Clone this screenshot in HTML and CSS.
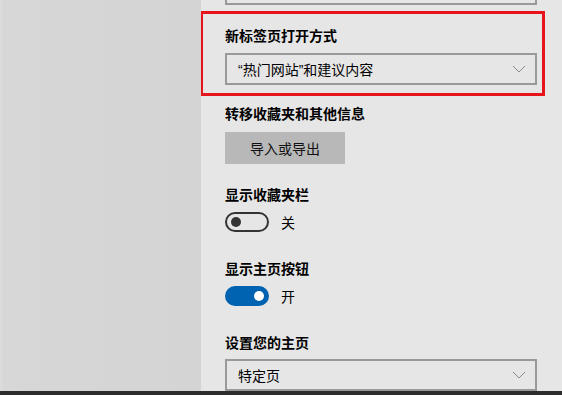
FILE: index.html
```html
<!DOCTYPE html>
<html lang="zh-CN">
<head>
<meta charset="utf-8">
<link rel="stylesheet" href="styles.css">
</head>
<body>
<div class="screen">
  <div class="main">
    <div class="backdrop"></div>
    <div class="panel">
      <div class="select select-cut"><span></span><svg class="chev" width="14" height="8" viewBox="0 0 14 8"><path d="M1 1 L7 7 L13 1" fill="none" stroke="#8a8a8a" stroke-width="1"/></svg></div>
      <div class="highlight">
        <div class="heading">新标签页打开方式</div>
        <div class="select"><span><span class="q">“</span>热门网站<span class="q">”</span>和建议内容</span><svg class="chev" width="14" height="8" viewBox="0 0 14 8"><path d="M1 1 L7 7 L13 1" fill="none" stroke="#8a8a8a" stroke-width="1"/></svg></div>
      </div>
      <div class="group g-first">
        <div class="heading">转移收藏夹和其他信息</div>
        <div class="button">导入或导出</div>
      </div>
      <div class="group g-btn">
        <div class="heading">显示收藏夹栏</div>
        <div class="toggle-row"><span class="toggle off"><span class="knob"></span></span><span class="tlabel">关</span></div>
      </div>
      <div class="group g-tog">
        <div class="heading">显示主页按钮</div>
        <div class="toggle-row"><span class="toggle on"><span class="knob"></span></span><span class="tlabel">开</span></div>
      </div>
      <div class="group g-tog g-last">
        <div class="heading">设置您的主页</div>
        <div class="select"><span>特定页</span><svg class="chev" width="14" height="8" viewBox="0 0 14 8"><path d="M1 1 L7 7 L13 1" fill="none" stroke="#8a8a8a" stroke-width="1"/></svg></div>
      </div>
    </div>
  </div>
  <div class="taskbar"></div>
</div>
</body>
</html>
```
FILE: styles.css
```css
html, body {
  margin: 0;
  padding: 0;
}
body {
  width: 562px;
  height: 395px;
  overflow: hidden;
  font-family: "Noto Sans CJK SC", "Noto Sans", sans-serif;
  font-size: 14px;
  color: #000;
}
.screen {
  display: flex;
  flex-direction: column;
  width: 562px;
  height: 395px;
}
.main {
  display: flex;
  height: 391px;
  overflow: hidden;
}
.backdrop {
  width: 201px;
  flex: none;
  background: linear-gradient(to right, #dddddd 0, #d7d7d7 3px, #d4d4d4 100%);
}
.panel {
  flex: 1;
  background: #e6e6e6;
  padding-left: 24px;
  overflow: hidden;
}
.taskbar {
  height: 4px;
  background: #2d2d2d;
}
.heading {
  font-weight: 700;
  line-height: 20px;
  height: 20px;
  margin-bottom: 7px;
  position: relative;
  top: -1px;
}
.select {
  box-sizing: border-box;
  width: 312px;
  height: 32px;
  border: 2px solid #999;
  display: flex;
  align-items: center;
  justify-content: space-between;
  padding: 0 9px 0 11px;
  line-height: 20px;
}
.q {
  font-family: "Liberation Sans", sans-serif;
}
.select-cut {
  margin-top: -27px;
}
.chev {
  display: block;
}
.highlight {
  margin-top: 6px;
  margin-left: -25px;
  width: 345px;
  box-sizing: border-box;
  border: 3px solid #e8141b;
  padding: 12px 0 8px 22px;
}
.g-first { margin-top: 8px; }
.g-first .heading { margin-bottom: 8px; }
.g-btn { margin-top: 21px; }
.g-tog { margin-top: 27px; }
.g-last .heading { margin-bottom: 6px; }
.button {
  width: 120px;
  height: 32px;
  background: #b8b8b8;
  display: flex;
  align-items: center;
  justify-content: center;
  line-height: 20px;
  color: #111;
}
.toggle-row {
  display: flex;
  align-items: center;
  height: 20px;
}
.toggle {
  box-sizing: border-box;
  width: 44px;
  height: 20px;
  border-radius: 10px;
  display: flex;
  align-items: center;
  padding: 0 4px;
}
.toggle.off {
  border: 2px solid #333;
  justify-content: flex-start;
}
.toggle.on {
  background: #0063b1;
  justify-content: flex-end;
  padding: 0 5px;
}
.knob {
  width: 10px;
  height: 10px;
  border-radius: 50%;
}
.toggle.off .knob { background: #333; }
.toggle.on .knob { background: #fff; }
.tlabel {
  margin-left: 12px;
  line-height: 20px;
}
```
